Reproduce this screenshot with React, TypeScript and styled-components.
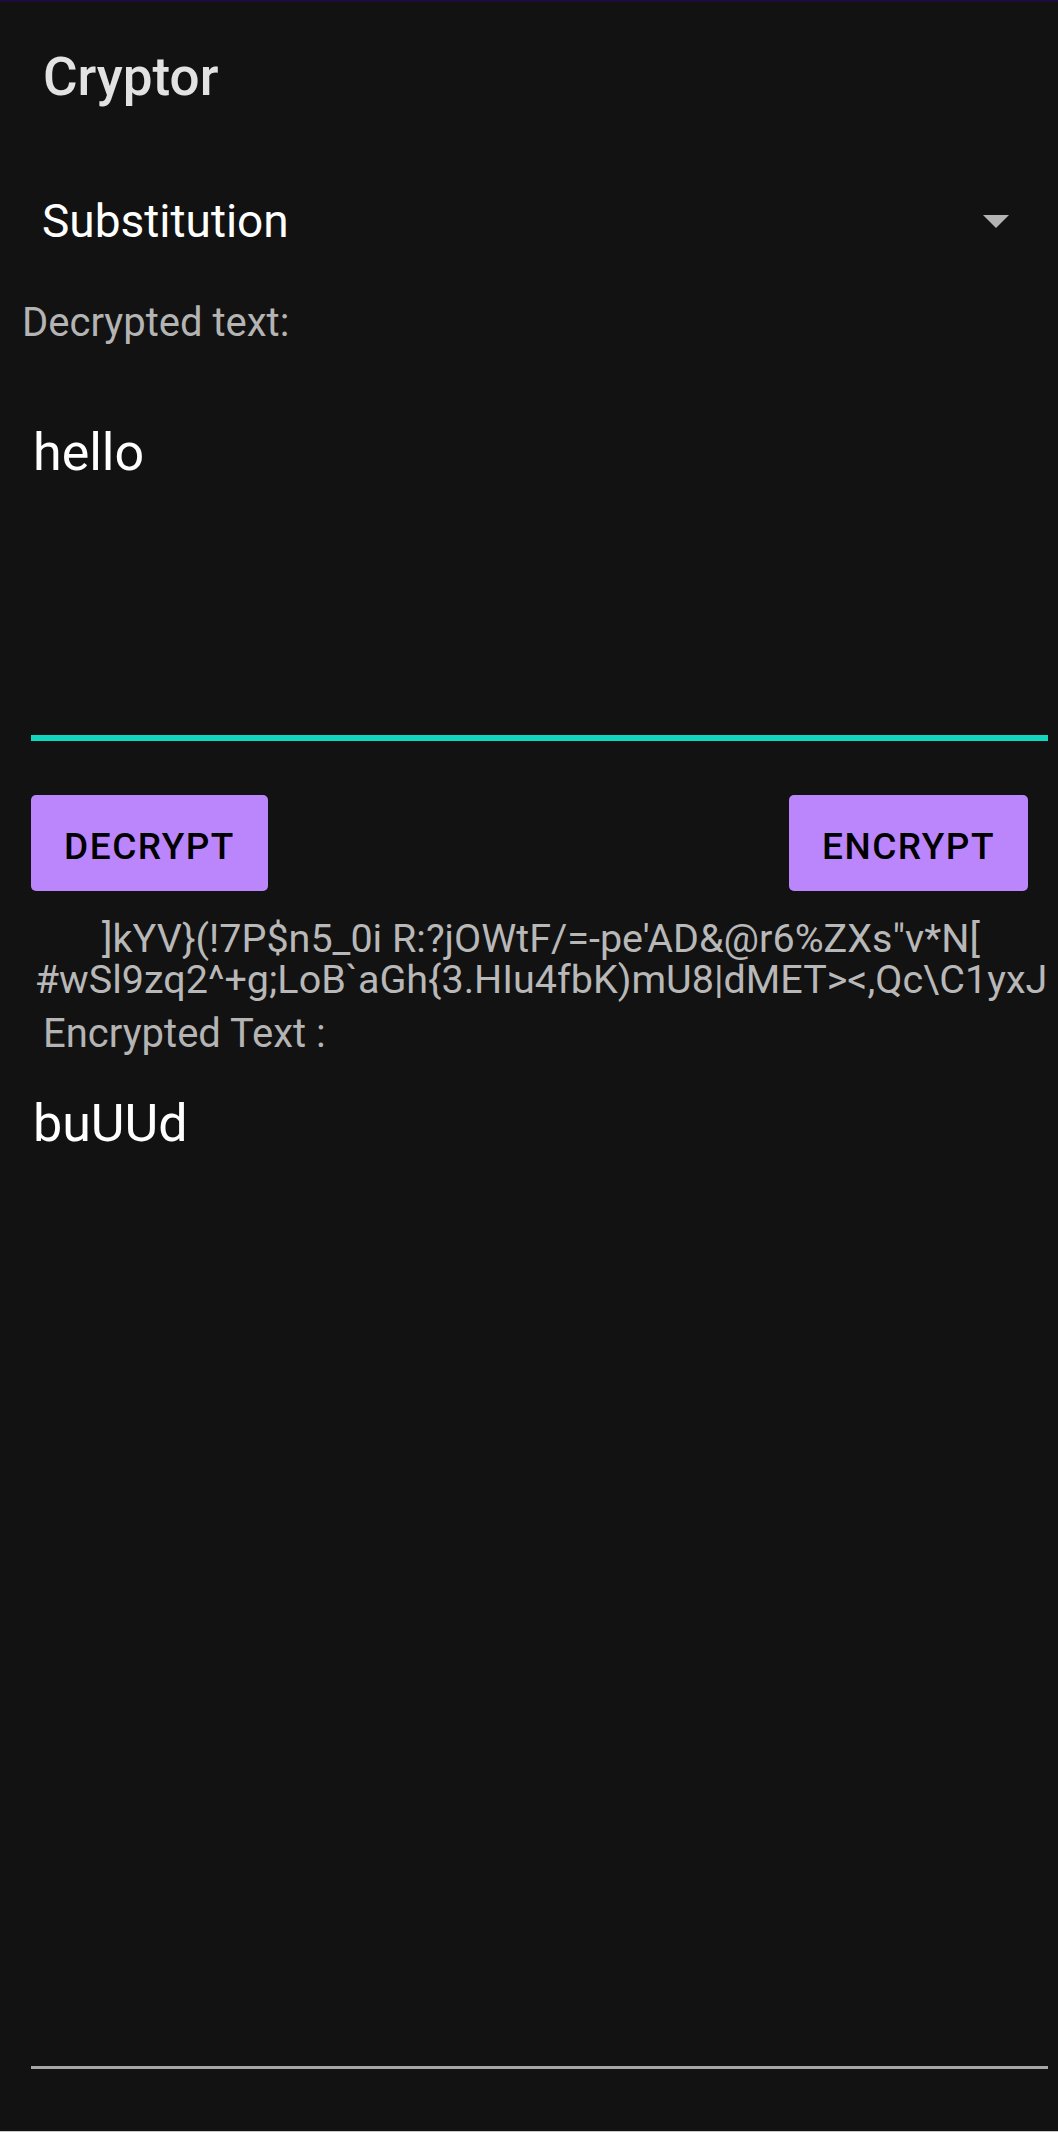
import React from "react";
import styled, { createGlobalStyle } from "styled-components";

const Global = createGlobalStyle`
  html, body {
    margin: 0;
    padding: 0;
    background: #121212;
  }
  body {
    font-family: Roboto, "Noto Sans", "Liberation Sans", sans-serif;
  }
  * { box-sizing: border-box; }
`;

const Screen = styled.div`
  width: 1058px;
  min-height: 2132px;
  background: #121212;
  display: flex;
  flex-direction: column;
`;

const StatusStrip = styled.div`
  height: 2px;
  background: #1d0d3d;
`;

const AppBar = styled.header`
  margin-top: 45px;
  padding-left: 43px;
`;

const Title = styled.h1`
  margin: 0;
  font-size: 53px;
  line-height: 60px;
  font-weight: 500;
  color: #e2e2e2;
`;

const Spinner = styled.div`
  margin-top: 86px;
  height: 56px;
  padding: 0 49px 0 42px;
  display: flex;
  align-items: center;
  justify-content: space-between;
`;

const SpinnerValue = styled.span`
  font-size: 46px;
  line-height: 56px;
  color: #ffffff;
`;

const Caret = styled.svg`
  width: 26px;
  height: 13px;
  margin-top: 1px;
  display: block;
`;

const Label = styled.div<{ $top: number; $left: number }>`
  margin-top: ${(p) => p.$top}px;
  padding-left: ${(p) => p.$left}px;
  font-size: 40px;
  line-height: 48px;
  color: #b4b4b4;
`;

const Field = styled.div<{ $top: number; $height: number; $line: string; $thick: number }>`
  margin: ${(p) => p.$top}px 10px 0 31px;
  height: ${(p) => p.$height}px;
  border-bottom: ${(p) => p.$thick}px solid ${(p) => p.$line};
  padding-left: 2px;
  font-size: 52px;
  line-height: 60px;
  color: #ffffff;
`;

const ButtonRow = styled.div`
  margin-top: 54px;
  padding: 0 30px 0 31px;
  display: flex;
  justify-content: space-between;
`;

const ActionButton = styled.button<{ $width: number }>`
  width: ${(p) => p.$width}px;
  height: 96px;
  padding: 6px 0 0 0;
  border: none;
  border-radius: 5px;
  background: #bb86fc;
  color: #000000;
  font-family: Roboto, "Noto Sans", "Liberation Sans", sans-serif;
  font-size: 37px;
  font-weight: 500;
  letter-spacing: 0.04em;
  display: flex;
  align-items: center;
  justify-content: center;
`;

const KeyText = styled.div`
  margin-top: 27px;
  padding-left: 24px;
  font-size: 39.5px;
  line-height: 41px;
  color: #b8b8b8;
  text-align: center;
  white-space: nowrap;
`;

const NavEdge = styled.div`
  margin-top: auto;
  height: 1px;
  background: #c8c8c8;
`;

export default function App() {
  return (
    <>
      <Global />
      <Screen>
        <StatusStrip />
        <AppBar>
          <Title>Cryptor</Title>
        </AppBar>
        <Spinner>
          <SpinnerValue>Substitution</SpinnerValue>
          <Caret viewBox="0 0 26 13">
            <polygon points="0,0 26,0 13,13" fill="#b3b3b3" />
          </Caret>
        </Spinner>
        <Label $top={50} $left={22}>Decrypted text:</Label>
        <Field $top={76} $height={318} $line="#12d6bd" $thick={6}>hello</Field>
        <ButtonRow>
          <ActionButton $width={237}>DECRYPT</ActionButton>
          <ActionButton $width={239}>ENCRYPT</ActionButton>
        </ButtonRow>
        <KeyText>
          {`]kYV}(!7P$n5_0i R:?jOWtF/=-pe'AD&@r6%ZXs"v*N[`}
          <br />
          {"#wSl9zq2^+g;LoB`aGh{3.HIu4fbK)mU8|dMET><,Qc\\C1yxJ"}
        </KeyText>
        <Label $top={10} $left={43}>Encrypted Text :</Label>
        <Field $top={36} $height={975} $line="#a6a6a6" $thick={3}>buUUd</Field>
        <NavEdge />
      </Screen>
    </>
  );
}
